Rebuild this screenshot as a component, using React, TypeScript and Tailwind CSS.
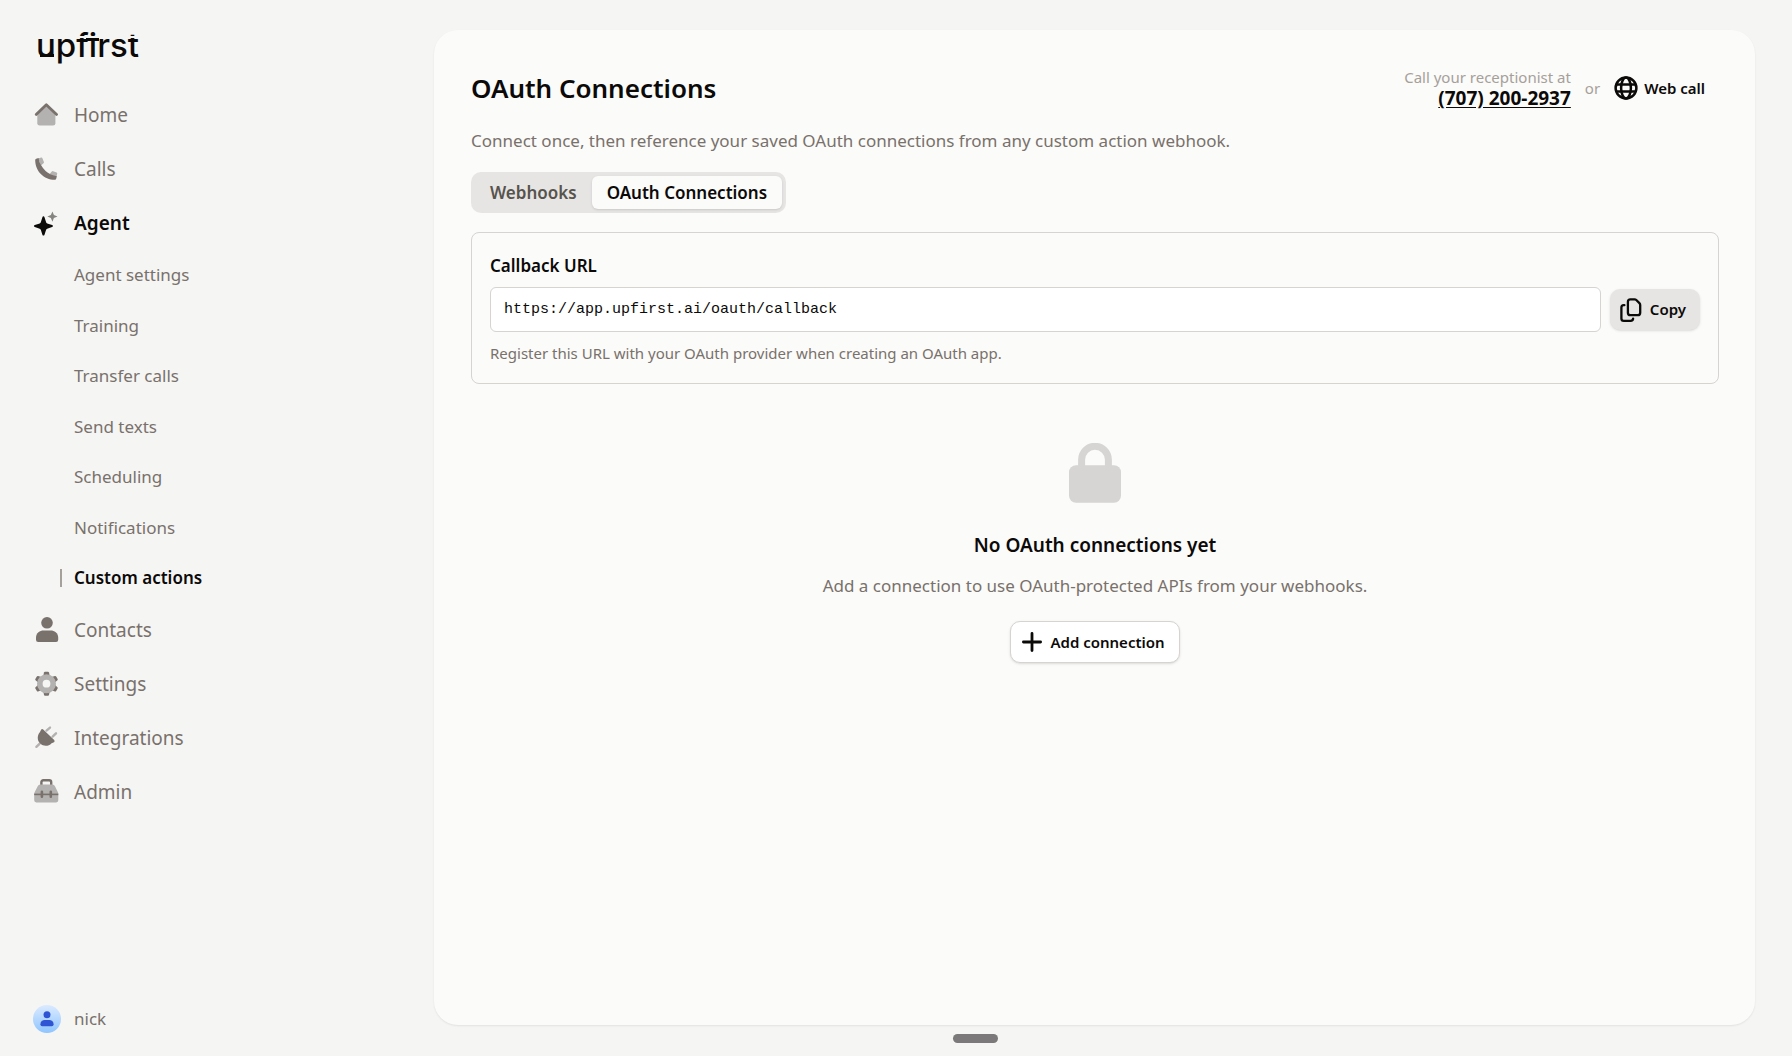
import { useState } from 'react';
import type { ReactNode } from 'react';

type NavItem = {
  label: string;
  icon: ReactNode;
  children?: string[];
};

const Icon = ({ children }: { children: ReactNode }) => (
  <svg viewBox="0 0 26 26" className="size-[26px] shrink-0" fill="none" aria-hidden="true">
    {children}
  </svg>
);

const HomeIcon = () => (
  <Icon>
    <path d="M13.3 3.5 4.3 12V21.2Q4.3 23.6 6.7 23.6H20Q22.4 23.6 22.4 21.2V12Z" fill="#b4b2b0" />
    <path d="M3.2 12.4 13.3 2.8 23.6 12.4" stroke="#78716c" strokeWidth="2.8" strokeLinecap="round" strokeLinejoin="round" />
  </Icon>
);

const PhoneIcon = () => (
  <Icon>
    <path d="M5.2 2.4 8.2 1.6Q9 1.4 9.4 2.2L10.9 5.9Q11.2 6.7 10.5 7.3L8 9.4ZM16.6 18 18.8 15.5Q19.4 14.8 20.2 15.2L23.6 16.6Q24.4 17 24.2 17.8L23.4 21.2Z" fill="#b4b2b0" />
    <path d="M2.2 3.9Q2.2 2.9 3.2 2.7L5.6 2.1Q6 6.4 8.3 9.6Q11.8 15.6 17 18Q19.8 19.6 23.8 20.3L23.2 22.7Q23 23.7 21.9 23.7C10.8 23.7 2.2 15 2.2 3.9Z" fill="#78716c" />
  </Icon>
);

const SparkleIcon = () => (
  <Icon>
    <path d="M10.4 6.3Q11.2 6.3 11.5 7.2L13.1 12.2Q13.4 13 14.2 13.4L19.1 15Q20 15.3 20 16Q20 16.7 19.1 17L14.2 18.7Q13.4 19 13.1 19.8L11.5 24.7Q11.2 25.6 10.4 25.6Q9.7 25.6 9.4 24.7L7.8 19.8Q7.5 19 6.7 18.7L1.8 17Q.9 16.7 .9 16Q.9 15.3 1.8 15L6.7 13.4Q7.5 13 7.8 12.2L9.4 7.2Q9.7 6.3 10.4 6.3Z" fill="#0c0a09" />
    <path d="M19.4 1.5 20.9 5.1 24.5 6.6 20.9 8.1 19.4 11.7 17.9 8.1 14.3 6.6 17.9 5.1Z" fill="#868481" />
  </Icon>
);

const UserIcon = () => (
  <Icon>
    <circle cx="14" cy="5.8" r="5.8" fill="#78716c" />
    <path d="M3 20.6C3 16.2 7 13.6 10.4 13.6H17.8C21.2 13.6 25.2 16.2 25.2 20.6V22.8Q25.2 25 23 25H5.2Q3 25 3 22.8Z" fill="#78716c" />
  </Icon>
);

const GearIcon = () => (
  <Icon>
    {[0, 60, 120, 180, 240, 300].map((angle) => (
      <path key={angle} d="M10.3 5 11 1.5Q11.2 .7 12 .7H15Q15.8 .7 16 1.5L16.7 5Z" fill="#78716c" transform={`rotate(${angle} 13.5 12.7)`} />
    ))}
    <circle cx="13.5" cy="12.7" r="6.7" stroke="#b4b2b0" strokeWidth="5.6" />
  </Icon>
);

const PlugIcon = () => (
  <Icon>
    <path d="M13.5 5.6 17 2.6M19.6 11.6 23 8.3M6.5 18.8 3.4 21.8" stroke="#b4b2b0" strokeWidth="2.4" strokeLinecap="round" />
    <path d="M8.2 4.6Q9 3.4 10.2 4.4L21.2 15.1Q22.2 16.4 21 17.2L18.6 18.2C15.5 21.6 10.4 21.6 7.2 18.6C4 15.4 4 10.4 7 7Z" fill="#78716c" />
  </Icon>
);

const ToolboxIcon = () => (
  <Icon>
    <path d="M8.4 7V3.3Q8.4 1.3 10.4 1.3H16.2Q18.2 1.3 18.2 3.3V7" stroke="#78716c" strokeWidth="2.4" />
    <path d="M7.2 5.6H19.6Q21.2 5.6 22 7.2L25 13.4Q25.3 14 25.3 14.8V21.3Q25.3 23.4 23.2 23.4H3.3Q1.2 23.4 1.2 21.3V14.8Q1.2 14 1.5 13.4L4.7 7.2Q5.5 5.6 7.2 5.6Z" fill="#b4b2b0" />
    <path d="M1.2 15.4H25.3" stroke="#78716c" strokeWidth="1.6" />
    <path d="M8.9 12.8V17.8M17.8 12.8V17.8" stroke="#78716c" strokeWidth="2.6" strokeLinecap="round" />
  </Icon>
);

const GlobeIcon = () => (
  <svg viewBox="0 0 24 24" className="size-6" fill="none" stroke="currentColor" strokeWidth="2.5" aria-hidden="true">
    <circle cx="12" cy="12" r="10.4" />
    <ellipse cx="12" cy="12" rx="4.9" ry="10.4" />
    <path d="M2.4 8.4H21.6M2.4 15.6H21.6" />
  </svg>
);

const CopyIcon = () => (
  <svg viewBox="0 0 24 26" className="h-[26px] w-6" fill="none" stroke="currentColor" strokeWidth="2.3" strokeLinecap="round" aria-hidden="true">
    <path d="M11.4 2.3H15.6Q16.6 2.3 17.3 3L20.4 6.1Q21.2 6.9 21.2 8V15.7Q21.2 18.2 18.7 18.2H11.4Q8.9 18.2 8.9 15.7V4.8Q8.9 2.3 11.4 2.3Z" />
    <path d="M5.4 8.2H4.7Q2.4 8.2 2.4 10.6V21.4Q2.4 23.8 4.8 23.8H11.6Q14.1 23.8 14.1 21.6" />
  </svg>
);

const LockIcon = () => (
  <svg viewBox="0 0 54 60" className="h-[60px] w-[54px]" aria-hidden="true">
    <path d="M13.6 24V16.7A13.4 13.4 0 0 1 40.4 16.7V24" fill="none" stroke="#d6d5d3" strokeWidth="7" />
    <rect x="1" y="22.3" width="52" height="37.5" rx="7" fill="#d6d5d3" />
  </svg>
);

// Wordmark with the square notches cut into the "f" and "t"
const Logo = () => (
  <svg viewBox="0 0 112 48" className="h-12 w-28" role="img" aria-label="upfirst">
    <text x="0" y="34" fontFamily="Inter, sans-serif" fontSize="33" fontWeight="500" fill="#0c0a09">
      upfirst
    </text>
    <rect x="4" y="31" width="14" height="3" fill="#0c0a09" />
    <rect x="42" y="13" width="24" height="2" fill="#f5f5f4" />
    <rect x="50" y="15" width="13" height="3" fill="#0c0a09" />
    <rect x="92" y="13" width="14" height="2" fill="#f5f5f4" />
  </svg>
);

const navItems: NavItem[] = [
  { label: 'Home', icon: <HomeIcon /> },
  { label: 'Calls', icon: <PhoneIcon /> },
  {
    label: 'Agent',
    icon: <SparkleIcon />,
    children: ['Agent settings', 'Training', 'Transfer calls', 'Send texts', 'Scheduling', 'Notifications', 'Custom actions'],
  },
  { label: 'Contacts', icon: <UserIcon /> },
  { label: 'Settings', icon: <GearIcon /> },
  { label: 'Integrations', icon: <PlugIcon /> },
  { label: 'Admin', icon: <ToolboxIcon /> },
];

const Sidebar = () => {
  const current = 'Custom actions';

  return (
    <aside className="w-[434px] shrink-0 flex flex-col pl-[33px] pt-[23px] pb-[23px]">
      <a href="#" className="self-start pl-[3px]">
        <Logo />
      </a>

      <nav className="mt-[17px]">
        {navItems.map((item) => (
          <div key={item.label}>
            <a
              href="#"
              className={`flex items-center gap-[15px] h-[54px] text-[19px] ${item.children ? 'text-stone-950 font-semibold' : 'text-stone-500'}`}
            >
              {item.icon}
              {item.label}
            </a>

            {item.children && (
              <div className="grid grid-rows-7 h-[353px] pl-[27px]">
                {item.children.map((child) => (
                  <a
                    key={child}
                    href="#"
                    className={`flex items-center gap-3 text-[17px] ${child === current ? 'text-stone-950 font-semibold' : 'text-stone-500'}`}
                  >
                    <span className={`w-0.5 h-[18px] ${child === current ? 'bg-stone-400' : ''}`} />
                    {child}
                  </a>
                ))}
              </div>
            )}
          </div>
        ))}
      </nav>

      <button type="button" className="mt-auto flex items-center gap-[13px] text-[17px] text-stone-500">
        <span className="size-7 rounded-full bg-linear-to-b from-blue-100 to-blue-300 flex items-center justify-center">
          <svg viewBox="0 0 14 16" className="w-3.5 h-4" fill="#2f55d4" aria-hidden="true">
            <circle cx="7" cy="3.8" r="3.5" />
            <path d="M.4 13.2C.4 10.4 2.6 9 4.6 9H9.4C11.4 9 13.6 10.4 13.6 13.2Q13.6 15.3 11.8 15.3H2.2Q.4 15.3 .4 13.2Z" />
          </svg>
        </span>
        nick
      </button>
    </aside>
  );
};

const tabs = ['Webhooks', 'OAuth Connections'];

const App = () => {
  const [activeTab, setActiveTab] = useState('OAuth Connections');

  return (
    <div className="flex h-screen bg-stone-100 text-stone-950 font-['Noto_Sans',sans-serif]">
      <Sidebar />

      <main className="flex-1 flex flex-col pt-[30px] pr-[37px]">
        <section className="flex-1 rounded-3xl bg-[#fbfbf9] shadow-[0_1px_2px_rgba(0,0,0,0.08)] pl-[37px] pr-9 pt-[34px]">
          <div className="flex items-start justify-between">
            <div>
              <h1 className="text-[26px] leading-[48px] font-semibold">OAuth Connections</h1>
              <p className="mt-4 text-[17px] leading-[26px] text-stone-500">
                Connect once, then reference your saved OAuth connections from any custom action webhook.
              </p>
            </div>

            <div className="flex items-center pr-[14px] pt-[3px]">
              <div className="flex flex-col items-end leading-[21px]">
                <span className="text-[15px] text-stone-400">Call your receptionist at</span>
                <a href="tel:+17072002937" className="text-[19px] font-bold underline underline-offset-2">
                  (707) 200-2937
                </a>
              </div>
              <span className="mx-[14px] text-[15px] text-stone-400">or</span>
              <button type="button" className="flex items-center gap-1.5 text-[15px] font-semibold">
                <GlobeIcon />
                Web call
              </button>
            </div>
          </div>

          <div role="tablist" className="mt-[18px] flex w-fit rounded-[10px] bg-stone-200 p-1">
            {tabs.map((tab) => (
              <button
                key={tab}
                type="button"
                role="tab"
                aria-selected={activeTab === tab}
                onClick={() => setActiveTab(tab)}
                className={`h-[33px] rounded-md px-[15px] text-[17px] font-semibold ${activeTab === tab ? 'bg-[#fbfbf9] shadow-sm' : 'text-stone-600'}`}
              >
                {tab}
              </button>
            ))}
          </div>

          <div className="mt-[19px] rounded-lg border border-stone-300 px-[18px] pt-5 pb-[19px]">
            <label htmlFor="callback-url" className="block text-[17px] leading-[26px] font-semibold">
              Callback URL
            </label>
            <div className="mt-2 flex items-center gap-[9px]">
              <input
                id="callback-url"
                type="text"
                readOnly
                value="https://app.upfirst.ai/oauth/callback"
                className="h-[45px] flex-1 rounded-md border border-stone-300 bg-white px-[13px] text-[15px] font-['Liberation_Mono',monospace]"
              />
              <button type="button" className="flex h-[41px] items-center gap-[7px] rounded-[10px] bg-stone-200 pl-[9px] pr-[14px] text-[15px] font-semibold shadow-sm">
                <CopyIcon />
                Copy
              </button>
            </div>
            <p className="mt-[10px] text-[15px] leading-[22px] text-stone-500">
              Register this URL with your OAuth provider when creating an OAuth app.
            </p>
          </div>

          <div className="mt-[59px] flex flex-col items-center">
            <LockIcon />
            <h2 className="mt-7 text-[19px] leading-[28px] font-semibold">No OAuth connections yet</h2>
            <p className="mt-[14px] text-[17px] leading-[26px] text-stone-500">
              Add a connection to use OAuth-protected APIs from your webhooks.
            </p>
            <button
              type="button"
              className="mt-[22px] flex h-[42px] items-center gap-2 rounded-[10px] border border-stone-300 bg-white pl-[11px] pr-[14px] text-[15px] font-semibold shadow-sm"
            >
              <svg viewBox="0 0 20 20" className="size-5" stroke="currentColor" strokeWidth="2.8" strokeLinecap="round" aria-hidden="true">
                <path d="M10 1.4V18.6M1.4 10H18.6" />
              </svg>
              Add connection
            </button>
          </div>
        </section>

        <div className="flex h-[31px] pl-[519px] pt-[9px]">
          <span className="h-[9px] w-[45px] rounded-full bg-[#7b7979]" />
        </div>
      </main>
    </div>
  );
};

export default App;
